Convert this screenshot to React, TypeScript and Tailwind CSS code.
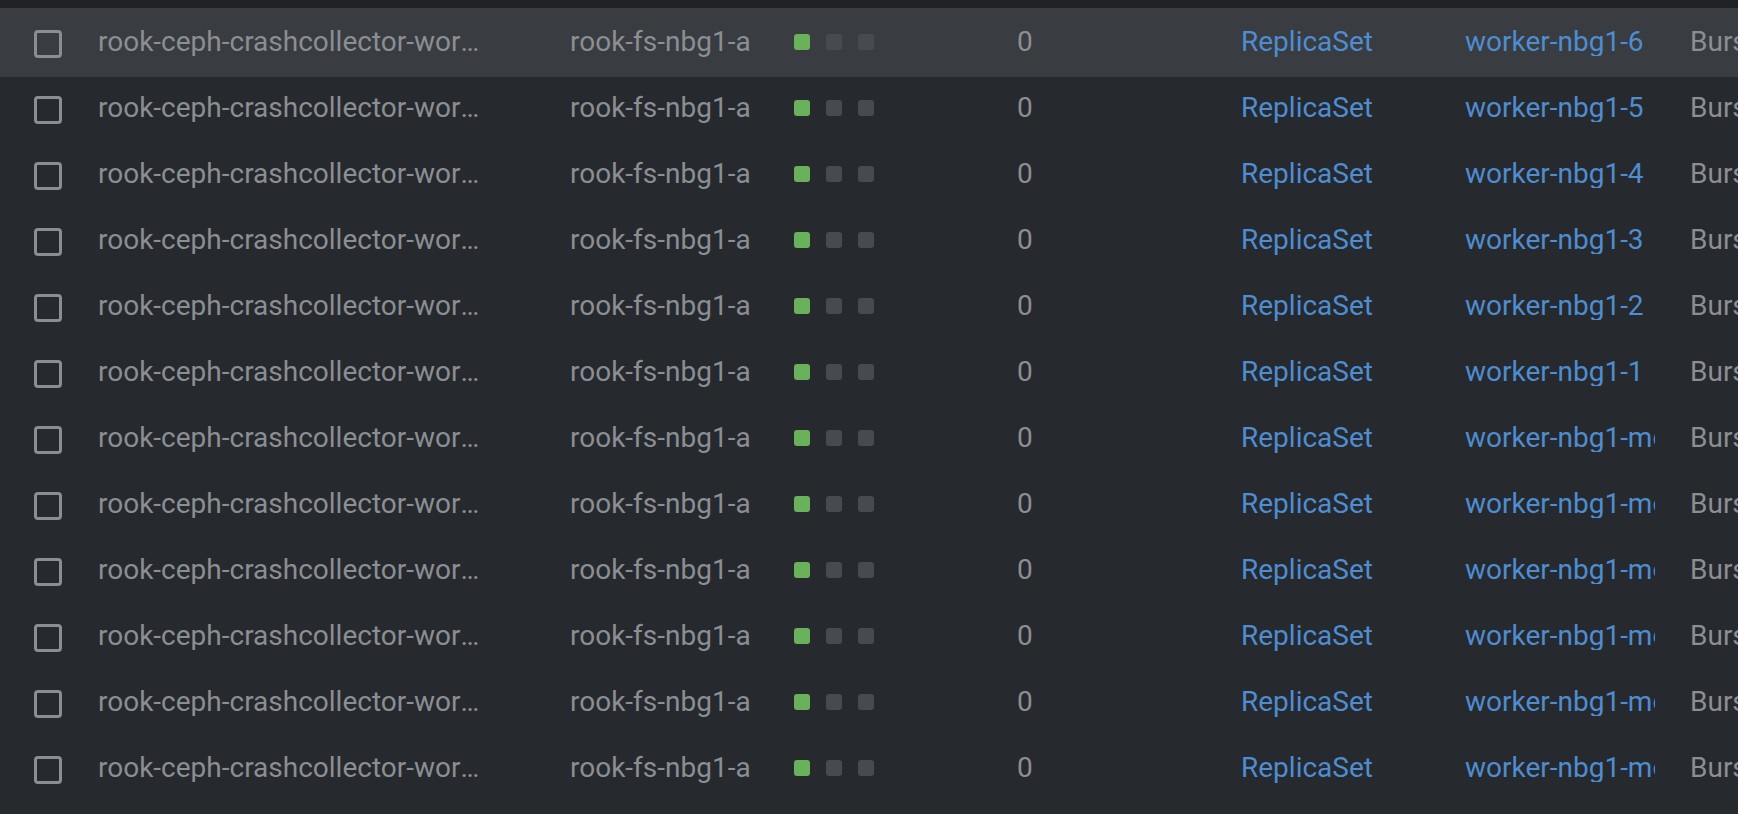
import React from "react";

const workers = [
  "worker-nbg1-6",
  "worker-nbg1-5",
  "worker-nbg1-4",
  "worker-nbg1-3",
  "worker-nbg1-2",
  "worker-nbg1-1",
  "worker-nbg1-monitoring-1",
  "worker-nbg1-monitoring-2",
  "worker-nbg1-monitoring-3",
  "worker-nbg1-monitoring-4",
  "worker-nbg1-monitoring-5",
  "worker-nbg1-monitoring-6",
];

function Row({ worker, first }: { worker: string; first: boolean }) {
  return (
    <div
      className={
        "flex items-center shrink-0 whitespace-nowrap pb-[4px] " +
        (first ? "h-[69px] pt-[2px] bg-[#393c41]" : "h-[66px]")
      }
    >
      <div className="w-[98px] shrink-0 pl-[34px] pt-[4px]">
        <div className="w-[28px] h-[28px] rounded-[4px] border-[3px] border-[#8a8d92]" />
      </div>
      <div className="w-[472px] shrink-0">
        <div className="w-[386px] truncate text-[#8b8e93]">
          rook-ceph-crashcollector-worker-nbg1-6-5f7d9c8b4-x2k9p
        </div>
      </div>
      <div className="w-[224px] shrink-0 text-[#8b8e93]">rook-fs-nbg1-a</div>
      <div className="w-[223px] shrink-0 flex gap-[16px]">
        <div className="w-[16px] h-[16px] rounded-[3px] bg-[#69b15b]" />
        <div className="w-[16px] h-[16px] rounded-[3px] bg-[#474a4f]" />
        <div className="w-[16px] h-[16px] rounded-[3px] bg-[#474a4f]" />
      </div>
      <div className="w-[224px] shrink-0 text-[#8b8e93]">0</div>
      <div className="w-[224px] shrink-0 text-[#4e8dd0]">ReplicaSet</div>
      <div className="w-[225px] shrink-0 pr-[35px]">
        <div className="overflow-hidden text-[#4e8dd0]">{worker}</div>
      </div>
      <div className="shrink-0 text-[#8b8e93]">Burstable</div>
    </div>
  );
}

export default function App() {
  return (
    <div
      className="w-full h-[814px] overflow-hidden bg-[#26292e] flex flex-col text-[28px] leading-none"
      style={{ fontFamily: "Roboto, 'Liberation Sans', sans-serif" }}
    >
      <div className="h-[8px] shrink-0 bg-[#1f2125]" />
      {workers.map((w, i) => (
        <Row key={i} worker={w} first={i === 0} />
      ))}
    </div>
  );
}
